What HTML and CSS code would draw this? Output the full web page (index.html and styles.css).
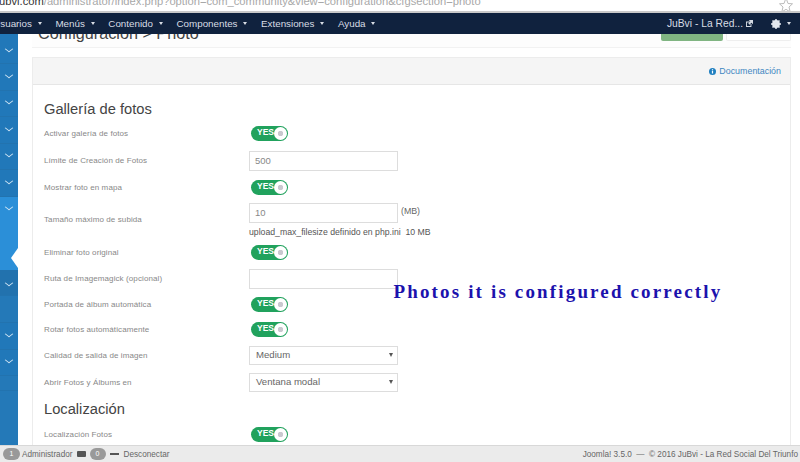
FILE: index.html
```html
<!DOCTYPE html>
<html lang="es">
<head>
<meta charset="utf-8">
<title>Configuración - Photo</title>
<link rel="stylesheet" href="styles.css">
</head>
<body>
<div class="urlbar">
  <div class="url"><span class="host">ubvi.com</span>/administrator/index.php?option=com_community&amp;view=configuration&amp;cfgsection=photo</div>
  <svg class="star" width="14" height="13" viewBox="0 0 14 13"><path d="M7 -2 L9 3.5 L13.5 3.8 L10 7 L11.2 12 L7 9.3 L2.8 12 L4 7 L.5 3.8 L5 3.5 Z" fill="none" stroke="#bbb"/></svg>
</div>
<nav class="navbar">
  <ul class="menu">
    <li>Usuarios <i class="caret"></i></li>
    <li>Menús <i class="caret"></i></li>
    <li>Contenido <i class="caret"></i></li>
    <li>Componentes <i class="caret"></i></li>
    <li>Extensiones <i class="caret"></i></li>
    <li>Ayuda <i class="caret"></i></li>
  </ul>
  <div class="navright">
    <span class="site">JuBvi - La Red...</span>
    <svg class="ext" width="7" height="7" viewBox="0 0 9 9"><path d="M0 2h5v1.200H1.200v4.600h4.600V5H7v4H0z M3.500 0H9v5.500L7 3.500 4.500 6 3 4.500 5.500 2z" fill="#d5dbe3"/></svg>
    <svg class="gear" width="10" height="10" viewBox="0 0 10 10"><circle cx="5" cy="5" r="2.800" fill="none" stroke="#e4e8ee" stroke-width="2.200"/><path d="M5 0v10M0 5h10M1.500 1.500l7 7M8.500 1.500l-7 7" stroke="#e4e8ee" stroke-width="1.500"/></svg>
    <i class="caret gearcaret"></i>
  </div>
</nav>
<div class="layout">
  <aside class="sidebar">
    <div class="side s1"><i class="chev"></i></div>
    <div class="side s2"><i class="chev"></i></div>
    <div class="side s2"><i class="chev"></i></div>
    <div class="side s2"><i class="chev"></i></div>
    <div class="side s2"><i class="chev"></i></div>
    <div class="side s2"><i class="chev"></i></div>
    <div class="side active"><i class="chev"></i><b class="notch"></b></div>
    <div class="side s3"><i class="chev"></i></div>
    <div class="side s4"></div>
    <div class="side s2"><i class="chev"></i></div>
    <div class="side s2"><i class="chev"></i></div>
    <div class="side s5"></div>
    <div class="side rest"></div>
  </aside>
  <main class="main">
    <div class="titlebar">
      <h1>Configuración &gt; Photo</h1>
      <div class="actions"><span class="btn-green"></span><span class="btn-white"></span></div>
    </div>
    <section class="panel">
      <div class="panelhead">
        <a class="doc"><svg width="7" height="7" viewBox="0 0 8 8"><circle cx="4" cy="4" r="4" fill="#1f7fc0"/><rect x="3.300" y="3.300" width="1.400" height="3" fill="#fff"/><rect x="3.300" y="1.400" width="1.400" height="1.300" fill="#fff"/></svg>Documentación</a>
      </div>
      <div class="panelbody">
        <h2 class="h-first">Gallería de fotos</h2>
        <div class="row h27"><label>Activar galería de fotos</label><span class="toggle">YES<b class="knob"></b></span></div>
        <div class="row h27"><label>Límite de Creación de Fotos</label><span class="input">500</span></div>
        <div class="row h26"><label>Mostrar foto en mapa</label><span class="toggle">YES<b class="knob"></b></span></div>
        <div class="row tall">
          <label>Tamaño máximo de subida</label>
          <div class="field">
            <div class="inline"><span class="input">10</span><span class="unit">(MB)</span></div>
            <div class="hint">upload_max_filesize definido en php.ini&nbsp; 10 MB</div>
          </div>
        </div>
        <div class="row h26"><label>Eliminar foto original</label><span class="toggle">YES<b class="knob"></b></span></div>
        <div class="row h27"><label>Ruta de Imagemagick (opcional)</label><span class="input"></span></div>
        <div class="row h25"><label>Portada de álbum automática</label><span class="toggle">YES<b class="knob"></b></span></div>
        <div class="row h25"><label>Rotar fotos automáticamente</label><span class="toggle">YES<b class="knob"></b></span></div>
        <div class="row h27"><label>Calidad de salida de imagen</label><span class="input select">Medium<i class="arrow"></i></span></div>
        <div class="row h27"><label>Abrir Fotos y Álbums en</label><span class="input select">Ventana modal<i class="arrow"></i></span></div>
        <h2 class="h-next">Localización</h2>
        <div class="row h27"><label>Localización Fotos</label><span class="toggle">YES<b class="knob"></b></span></div>
      </div>
    </section>
  </main>
</div>
<div class="note">Photos it is configured correctly</div>
<footer class="footer">
  <div class="status">
    <span class="pill first">1</span><span class="admin">Administrador</span>
    <svg width="9" height="6" viewBox="0 0 9 6"><rect width="9" height="6" rx="1" fill="#555"/></svg>
    <span class="pill">0</span>
    <svg width="9" height="2" viewBox="0 0 9 2"><rect width="9" height="2" fill="#555"/></svg>
    <span class="logout">Desconectar</span>
  </div>
  <div class="copy">Joomla! 3.5.0 &nbsp;— &nbsp;© 2016 JuBvi - La Red Social Del Triunfo</div>
</footer>
</body>
</html>
```
FILE: styles.css
```css
* { box-sizing: border-box; }
html, body { margin: 0; height: 100%; }
body {
  width: 800px; height: 462px; overflow: hidden;
  position: relative;
  display: flex; flex-direction: column;
  font-family: "Liberation Sans", Arial, sans-serif;
  background: #fff; color: #333;
}
.urlbar {
  height: 13px; flex: none; display: flex; justify-content: space-between;
  background: #fff; border-bottom: 2px solid #c9c9c9; overflow: hidden; position: relative;
}
.url { font-size: 11.200px; line-height: 13px; margin-top: -5px; margin-left: -1px; color: #a8a8a8; white-space: nowrap; }
.host { color: #333; }
.star { margin: 0 7px 0 0; }
.navbar {
  height: 21px; flex: none; background: #10223e; color: #d8dde5;
  display: flex; justify-content: space-between; align-items: center;
  font-size: 9.800px; position: relative; z-index: 2;
}
.menu { list-style: none; margin: 0 0 0 -6.800px; padding: 0; display: flex; gap: 13.800px; }
.menu li { white-space: nowrap; }
.caret {
  display: inline-block; width: 0; height: 0; margin-left: 3px; vertical-align: 2px;
  border-left: 2.500px solid transparent; border-right: 2.500px solid transparent; border-top: 3px solid #d8dde5;
}
.navright { display: flex; align-items: center; margin-right: 9px; }
.site { font-size: 10.300px; }
.ext { margin-left: 3px; }
.gear { margin-left: 18px; }
.gearcaret { margin-left: 6px; vertical-align: 0; }
.layout { flex: 1; min-height: 0; display: flex; }
.sidebar { width: 18px; flex: none; display: flex; flex-direction: column; background: #2479b8; }
.side { flex: none; position: relative; height: 26.500px; display: flex; justify-content: center; padding-top: 10px; border-bottom: 1px solid #2273af; }
.s1 { height: 30px; padding-top: 14px; background: #2178b9; }
.s2 { background: #2178b9; padding-top: 9.500px; }
.active { height: 73.500px; background: #2b8fd8; border: 0; padding-top: 9.500px; }
.s3 { height: 26px; padding-top: 12px; background: #2272ae; }
.s4 { height: 27px; }
.s5 { height: 15px; }
.rest { flex: 1; border: 0; }
.chev {
  display: block; width: 6px; height: 6px; margin-top: -2px;
  border-right: 1.500px solid #d5e8f6; border-bottom: 1.500px solid #d5e8f6; transform: scaleY(.75) rotate(45deg);
}
.notch {
  position: absolute; right: 0; top: 51px; width: 0; height: 0;
  border-top: 10.500px solid transparent; border-bottom: 10.500px solid transparent; border-right: 7px solid #fff;
}
.main { flex: 1; min-width: 0; overflow: hidden; padding: 0 9px 0 14px; background: #fff; }
.titlebar { height: 14px; margin-bottom: 9px; display: flex; justify-content: space-between; border-bottom: 1px solid #f2f2f2; background: #fdfdfd; }
h1 { margin: -11px 0 0 6px; font-weight: 400; font-size: 16.200px; line-height: 20px; color: #444; white-space: nowrap; }
.actions { display: flex; gap: 3px; height: 7px; }
.btn-green { width: 62px; background: #80b582; border-radius: 0 0 2px 2px; }
.btn-white { width: 65px; background: #fff; border: 1px solid #eee; border-top: 0; border-radius: 0 0 2px 2px; }
.panel { border: 1px solid #ececec; border-bottom: 0; height: 400px; }
.panelhead { height: 27px; background: #f5f5f5; border-bottom: 1px solid #e6e6e6; display: flex; justify-content: flex-end; align-items: center; padding-right: 9px; }
.doc { font-size: 8.900px; color: #3f87c2; display: flex; align-items: center; gap: 3px; }
.panelbody { padding: 0 0 0 11px; }
h2 { margin: 0; font-weight: 400; font-size: 14.700px; line-height: 20px; color: #444; }
.h-first { padding-top: 14px; height: 35px; }
.h-next { padding-top: 3px; height: 25px; }
.row { display: flex; align-items: center; }
.h25 { height: 25px; } .h26 { height: 26px; } .h27 { height: 27px; }
.tall { height: 39px; }
.row label { width: 205px; flex: none; font-size: 8px; letter-spacing: .1px; color: #888; }
.toggle {
  width: 37px; height: 15px; border-radius: 8px; background: #21a25d; color: #fff; margin-left: 2px;
  font-size: 8.500px; font-weight: 700; line-height: 13px; padding-left: 6px; position: relative;
}
.knob {
  position: absolute; right: 1px; top: 1px; width: 13px; height: 13px; border-radius: 50%;
  background: radial-gradient(circle, #c9c9cf 0 2.500px, #fff 3px);
}
.input {
  width: 149px; height: 20px; border: 1px solid #ddd; font-size: 9.500px; line-height: 18px; padding-left: 5px; color: #888; display: block; background: #fff;
}
.select { height: 18.500px; line-height: 16px; padding-left: 6px; font-size: 9.600px; color: #666; position: relative; }
.arrow {
  position: absolute; right: 4px; top: 6px; width: 0; height: 0;
  border-left: 2px solid transparent; border-right: 2px solid transparent; border-top: 4px solid #555;
}
.field { display: flex; flex-direction: column; align-self: flex-start; margin-top: 3px; }
.inline { display: flex; align-items: flex-start; gap: 3px; }
.unit { font-size: 8.800px; color: #666; line-height: 16px; }
.hint { font-size: 8.700px; color: #555; line-height: 11px; margin-top: 3.500px; white-space: nowrap; }
.note {
  position: absolute; left: 393.500px; top: 282px;
  font-family: "Liberation Serif", serif; font-weight: 700; font-size: 19px; letter-spacing: 2.150px; line-height: 20px;
  color: #1c12ad; white-space: nowrap;
}
.footer {
  height: 17px; flex: none; background: #ebebeb; border-top: 1px solid #d8d8d8; display: flex; justify-content: space-between; align-items: center;
  font-size: 8.200px; color: #666; padding: 0 2px 0 3px;
}
.status { display: flex; align-items: center; gap: 4px; }
.pill { width: 16px; height: 12px; border-radius: 6px; background: #999; color: #fff; font-size: 7px; line-height: 12px; text-align: center; }
.first { width: 17px; }
.admin { margin-left: -2px; }
.logout { margin-left: 1px; }
```
